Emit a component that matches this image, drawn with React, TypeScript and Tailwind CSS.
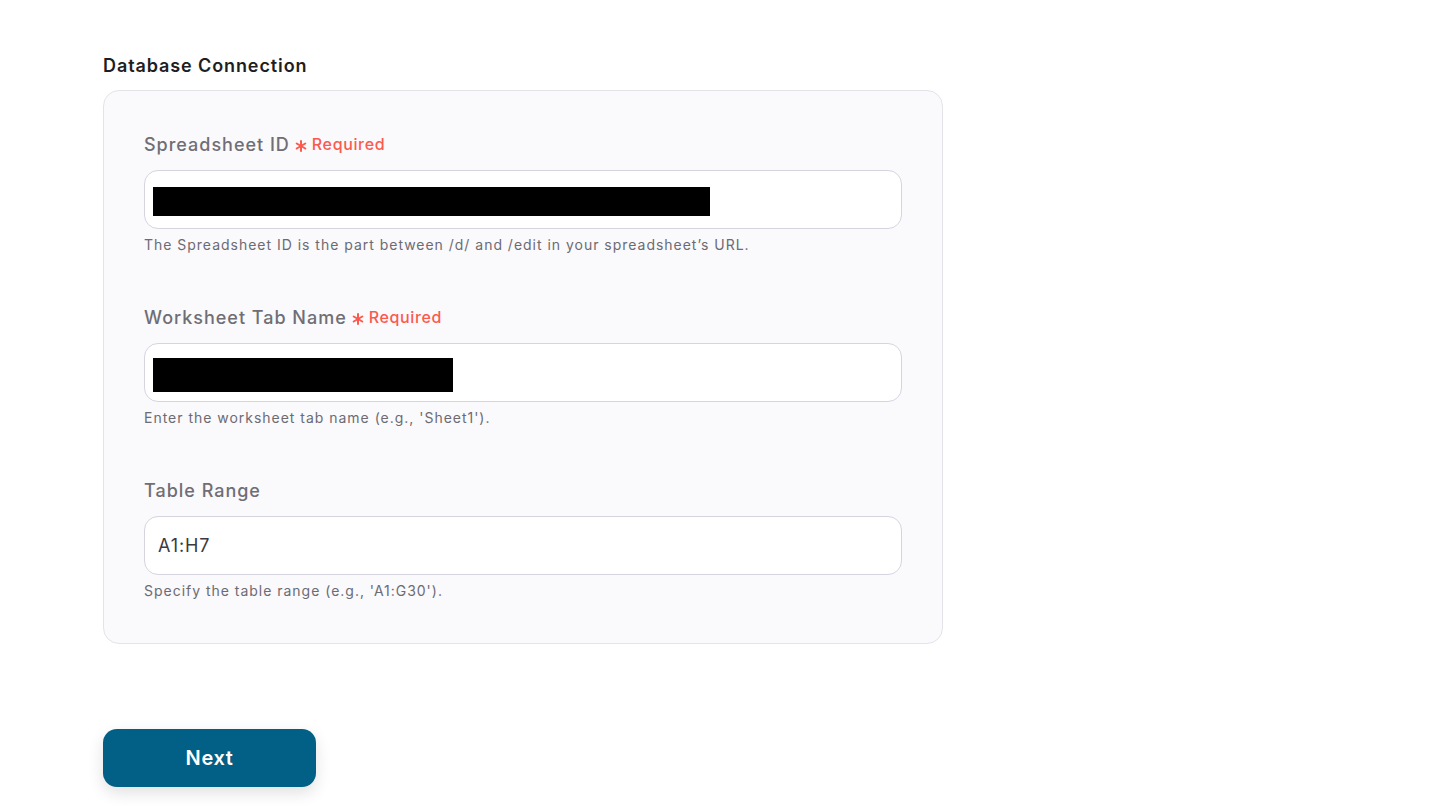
import React from "react";

function Field({
  label,
  required,
  helper,
  children,
}: {
  label: string;
  required?: boolean;
  helper: string;
  children: React.ReactNode;
}) {
  return (
    <div className="flex flex-col">
      <div className="flex items-center h-[28px]">
        <span className="text-[18px] font-medium text-[#6f6e75] tracking-[0.055em]">{label}</span>
        {required && (
          <span className="ml-[5px] flex items-center text-[16px] font-medium text-[#fb5a4e] tracking-[0.04em]">
            <svg width="12" height="12" viewBox="0 0 12 12" className="mr-[5px] mt-[4px]">
              <g stroke="#fb5a4e" strokeWidth="2" strokeLinecap="round">
                <line x1="6" y1="1" x2="6" y2="11" />
                <line x1="1.7" y1="3.5" x2="10.3" y2="8.5" />
                <line x1="1.7" y1="8.5" x2="10.3" y2="3.5" />
              </g>
            </svg>
            Required
          </span>
        )}
      </div>
      <div className="mt-[12px] h-[59px] rounded-[14px] border border-[#d6d4de] bg-white flex items-center px-[8px]">
        {children}
      </div>
      <div className="mt-[6px] h-[20px] text-[14px] leading-[20px] text-[#6c6b72] tracking-[0.07em]">{helper}</div>
    </div>
  );
}

export default function App() {
  return (
    <div className="min-h-[806px] bg-white pl-[103px] pt-[53px]" style={{ fontFamily: "Inter, 'Noto Sans', sans-serif" }}>
      <div className="text-[18px] leading-[26px] font-semibold text-[#1e1e22] tracking-[0.05em]">Database Connection</div>
      <div className="mt-[11px] w-[840px] rounded-[16px] border border-[#e4e3ea] bg-[#faf9fc] px-[40px] pt-[39px] pb-[42px] flex flex-col gap-[48px]">
        <Field label="Spreadsheet ID" required helper="The Spreadsheet ID is the part between /d/ and /edit in your spreadsheet’s URL.">
          <div className="mt-[4px] h-[29px] w-[557px] bg-black" />
        </Field>
        <Field label="Worksheet Tab Name" required helper="Enter the worksheet tab name (e.g., 'Sheet1').">
          <div className="mt-[4px] h-[34px] w-[300px] bg-black" />
        </Field>
        <Field label="Table Range" helper="Specify the table range (e.g., 'A1:G30').">
          <span className="pl-[5px] text-[18px] text-[#3a3a3f] tracking-[0.05em]">A1:H7</span>
        </Field>
      </div>
      <button className="mt-[85px] w-[213px] h-[58px] rounded-[14px] bg-[#025f85] text-white text-[20px] font-semibold tracking-[0.03em] shadow-[0_6px_16px_rgba(0,0,0,0.12)]">
        Next
      </button>
    </div>
  );
}
